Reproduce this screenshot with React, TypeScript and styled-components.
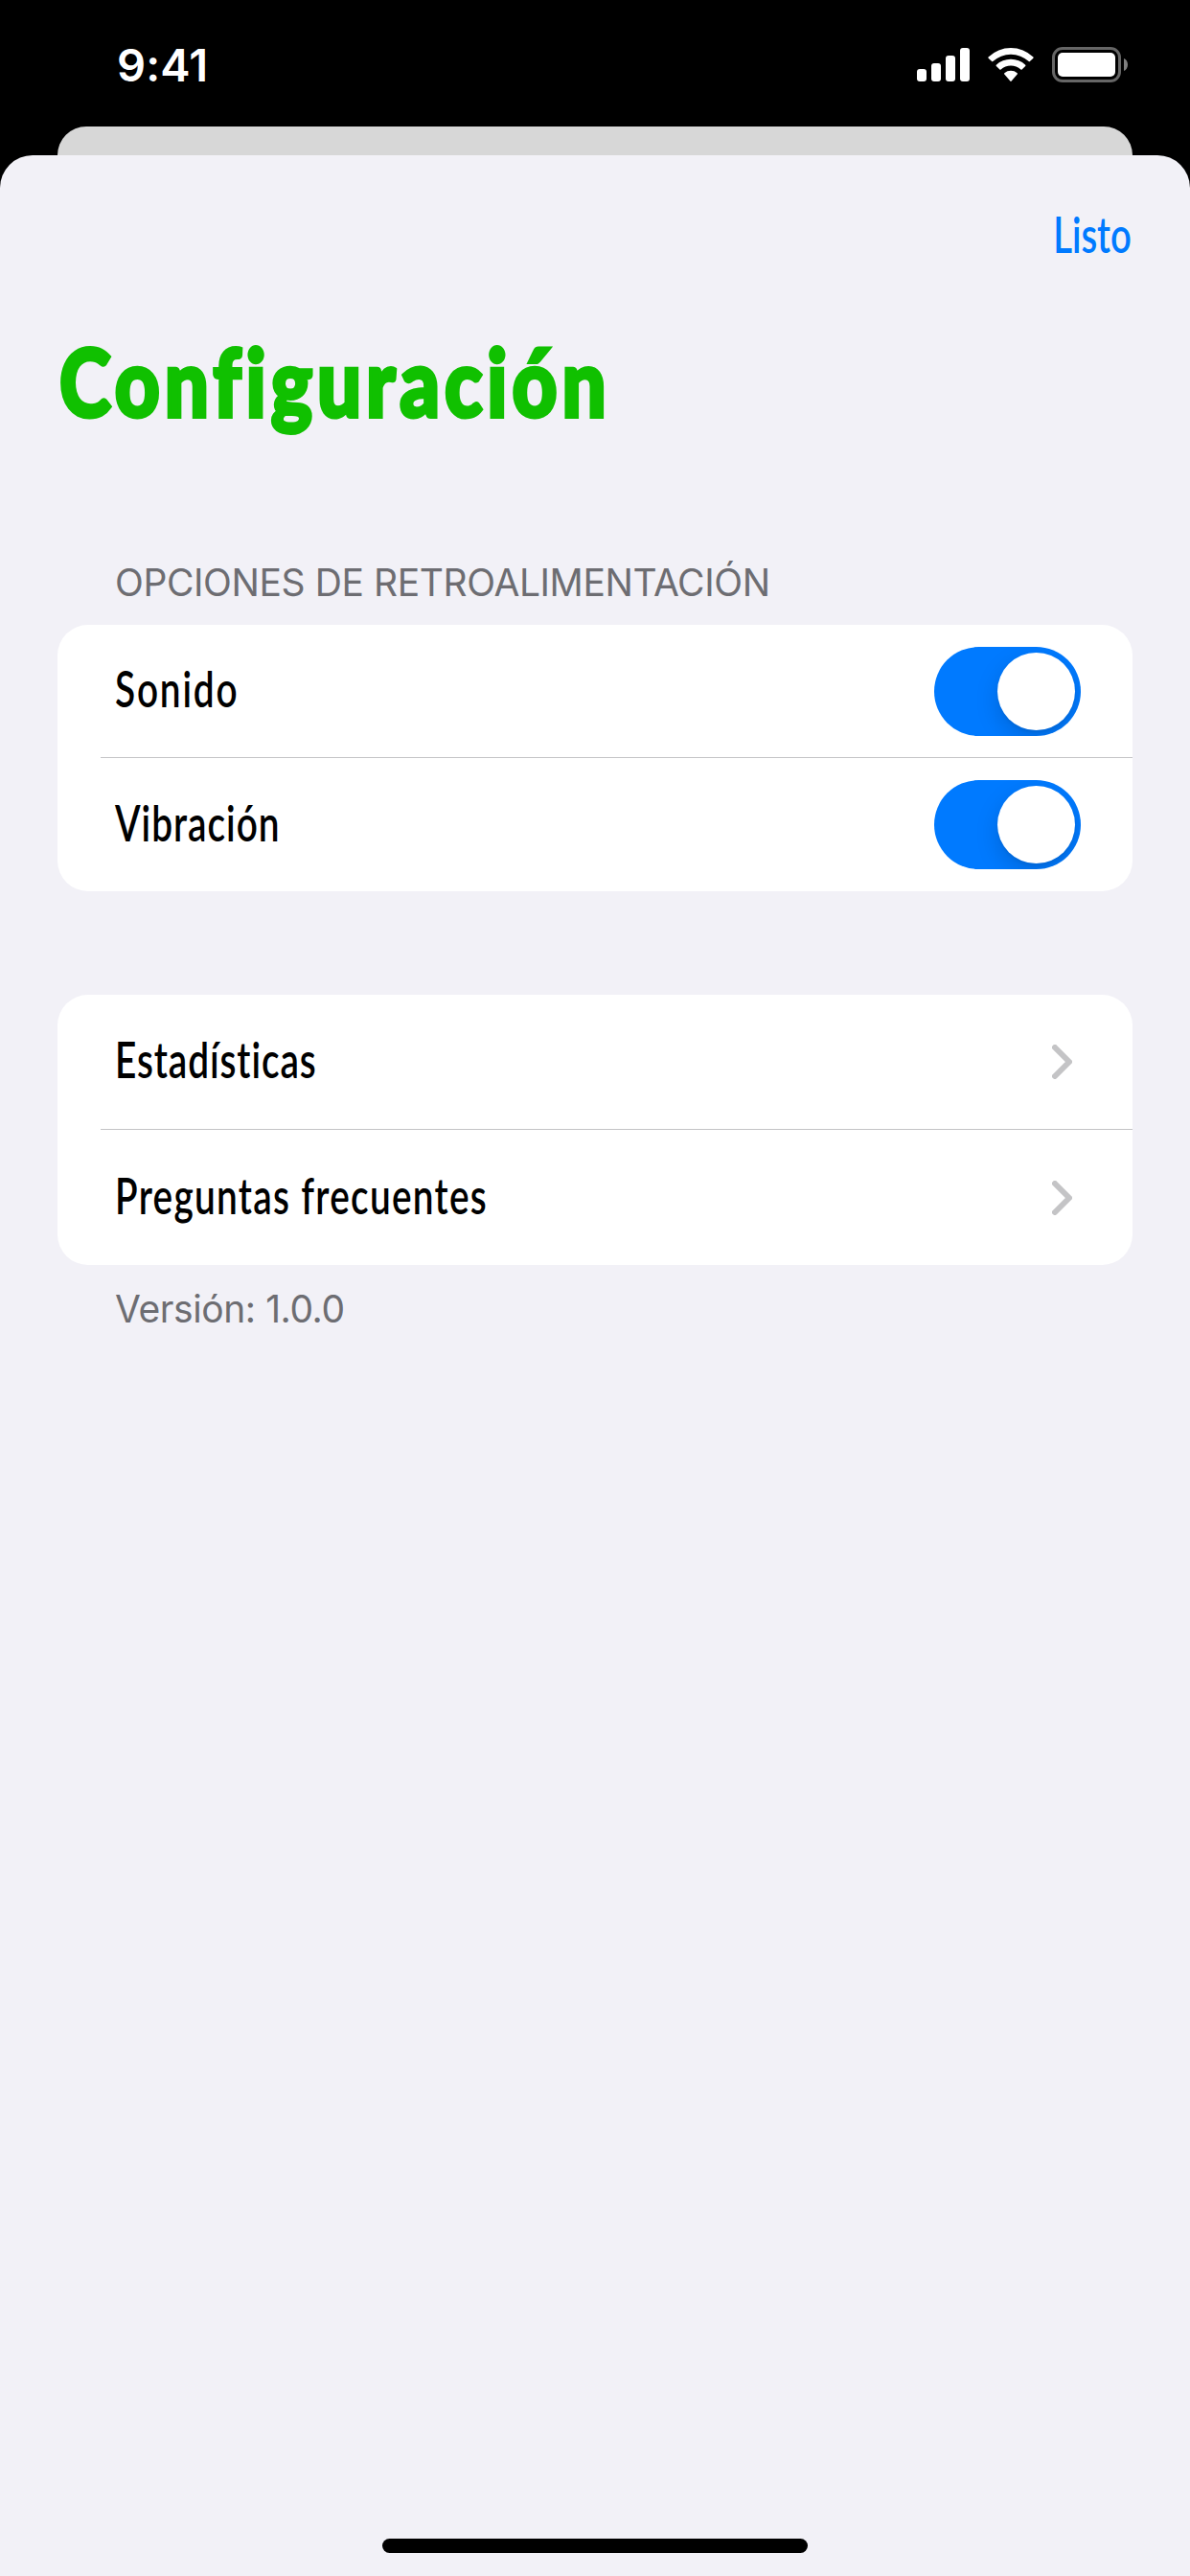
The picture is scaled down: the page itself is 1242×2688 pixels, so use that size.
import React, { useState } from "react";
import styled, { createGlobalStyle } from "styled-components";

const GlobalStyle = createGlobalStyle`
  * { box-sizing: border-box; }
  body { margin: 0; background: #000; }
`;

const condensedFamily = `Lato, "Open Sans", sans-serif`;
const systemFamily = `Inter, "Liberation Sans", sans-serif`;

const Screen = styled.div`
  display: flex;
  flex-direction: column;
  width: 1242px;
  height: 2688px;
  background: #000;
  overflow: hidden;
`;

const StatusBar = styled.header`
  display: flex;
  align-items: center;
  justify-content: space-between;
  height: 132px;
  padding: 3px 64px 0 122px;
`;

const Clock = styled.time`
  font: 600 47px/57px ${systemFamily};
  letter-spacing: 0.1px;
  color: #fff;
`;

const StatusIcons = styled.div`
  display: flex;
  align-items: center;
  gap: 19px;

  svg {
    display: block;
  }
`;

const BackCard = styled.div`
  height: 30px;
  margin: 0 60px;
  border-radius: 30px 30px 0 0;
  background: #d7d7d7;
`;

const Sheet = styled.main`
  display: flex;
  flex: 1;
  flex-direction: column;
  border-radius: 34px 34px 0 0;
  background: #f2f1f7;
`;

const NavBar = styled.nav`
  display: flex;
  align-items: center;
  justify-content: flex-end;
  height: 164px;
  padding: 2px 61px 0 0;
`;

const DoneButton = styled.button`
  padding: 0;
  border: 0;
  background: none;
  color: #007aff;
  font: 600 51px/62px ${condensedFamily};
  transform: scaleX(0.75);
  transform-origin: right center;
`;

const Title = styled.h1`
  align-self: flex-start;
  margin: 12px 0 0 62px;
  color: #10c000;
  font: 900 97px/120px ${condensedFamily};
  letter-spacing: 5.9px;
  white-space: nowrap;
  -webkit-text-stroke: 4px #10c000;
  transform: scaleX(0.84);
  transform-origin: left center;
`;

const Section = styled.section<{ $top: number }>`
  display: flex;
  flex-direction: column;
  margin: ${(p) => p.$top}px 60px 0;
`;

const SectionHeader = styled.h2`
  margin: 0;
  padding-left: 60px;
  color: #6d6d72;
  font: 400 39px/88px ${systemFamily};
  letter-spacing: -0.4px;
`;

const SectionFooter = styled.p`
  margin: 22px 0 0;
  padding-left: 60px;
  color: #6d6d72;
  font: 400 39px/48px ${systemFamily};
  letter-spacing: -0.43px;
`;

const Card = styled.div`
  display: flex;
  flex-direction: column;
  border-radius: 32px;
  background: #fff;
  overflow: hidden;
`;

const Separator = styled.hr`
  width: calc(100% - 45px);
  height: 1px;
  margin: 0 0 0 45px;
  border: 0;
  background: #c4c4c6;
`;

const Row = styled.div<{ $height: number; $end: number }>`
  display: flex;
  align-items: center;
  justify-content: space-between;
  height: ${(p) => p.$height}px;
  padding: 0 ${(p) => p.$end}px 0 60px;
`;

const RowLabel = styled.span<{ $tracking: number }>`
  padding-bottom: 4px;
  color: #000;
  font: 600 51px/62px ${condensedFamily};
  letter-spacing: ${(p) => p.$tracking}px;
  white-space: nowrap;
  transform: scaleX(0.76);
  transform-origin: left center;
`;

const Track = styled.button<{ $on: boolean }>`
  display: flex;
  align-items: center;
  justify-content: ${(p) => (p.$on ? "flex-end" : "flex-start")};
  width: 153px;
  height: 93px;
  padding: 0 6px;
  border: 0;
  border-radius: 47px;
  background: ${(p) => (p.$on ? "#007aff" : "#e9e9eb")};
  overflow: hidden;
`;

const Thumb = styled.span`
  width: 81px;
  height: 81px;
  border-radius: 50%;
  background: #fff;
  box-shadow: 0 9px 24px rgba(0, 0, 0, 0.15), 0 3px 3px rgba(0, 0, 0, 0.05);
`;

const HomeArea = styled.footer`
  display: flex;
  justify-content: center;
  margin-top: auto;
  padding-bottom: 24px;
`;

const HomeIndicator = styled.div`
  width: 444px;
  height: 15px;
  border-radius: 8px;
  background: #000;
`;

function SignalIcon() {
  return (
    <svg width="55" height="37" viewBox="0 0 55 37" fill="#fff">
      <rect x="0" y="23" width="10" height="13" rx="3" />
      <rect x="15" y="17" width="10" height="19" rx="3" />
      <rect x="30" y="9" width="10" height="27" rx="3" />
      <rect x="45" y="1" width="10" height="35" rx="3" />
    </svg>
  );
}

function WifiIcon() {
  return (
    <svg width="48" height="37" viewBox="0 0 48 37" fill="#fff">
      <path d="M0.6 10.4A34 34 0 0 1 47.4 10.4Q48 11 47.4 11.7L43.9 15.1Q43.3 15.6 42.7 15.1A27.4 27.4 0 0 0 5.3 15.1Q4.7 15.6 4.1 15.1L0.6 11.7Q0 11 0.6 10.4Z" />
      <path d="M8.8 18.7A22.4 22.4 0 0 1 39.2 18.7Q39.8 19.3 39.2 19.9L35.6 23.6Q35 24.1 34.4 23.6A15.4 15.4 0 0 0 13.6 23.6Q13 24.1 12.4 23.6L8.8 19.9Q8.2 19.3 8.8 18.7Z" />
      <path d="M17.3 27.2A10.4 10.4 0 0 1 30.7 27.2Q31.3 27.9 30.7 28.6L24.7 35.6Q24 36.4 23.3 35.6L17.3 28.6Q16.7 27.9 17.3 27.2Z" />
    </svg>
  );
}

function BatteryIcon() {
  return (
    <svg width="80" height="37" viewBox="0 0 80 37">
      <rect x="1.5" y="1.5" width="69" height="34" rx="9.5" fill="none" stroke="#666" strokeWidth="3" />
      <rect x="6" y="6" width="60" height="25" rx="5" fill="#fff" />
      <path d="M75 12C77.6 13 79 15.6 79 18.5S77.6 24 75 25Z" fill="#808080" />
    </svg>
  );
}

function ChevronIcon() {
  return (
    <svg width="21" height="36" viewBox="0 0 21 36" fill="none">
      <path d="M3 3L18 18L3 33" stroke="#c4c4c6" strokeWidth="6" strokeLinecap="round" strokeLinejoin="round" />
    </svg>
  );
}

function Toggle({ label }: { label: string }) {
  const [on, setOn] = useState(true);
  return (
    <Track type="button" role="switch" aria-checked={on} aria-label={label} $on={on} onClick={() => setOn(!on)}>
      <Thumb />
    </Track>
  );
}

export default function App() {
  return (
    <Screen>
      <GlobalStyle />
      <StatusBar>
        <Clock>9:41</Clock>
        <StatusIcons>
          <SignalIcon />
          <WifiIcon />
          <BatteryIcon />
        </StatusIcons>
      </StatusBar>
      <BackCard />
      <Sheet>
        <NavBar>
          <DoneButton type="button">Listo</DoneButton>
        </NavBar>
        <Title>Configuración</Title>

        <Section $top={106}>
          <SectionHeader>OPCIONES DE RETROALIMENTACIÓN</SectionHeader>
          <Card>
            <Row $height={138} $end={54}>
              <RowLabel $tracking={2.4}>Sonido</RowLabel>
              <Toggle label="Sonido" />
            </Row>
            <Separator />
            <Row $height={139} $end={54}>
              <RowLabel $tracking={1.3}>Vibración</RowLabel>
              <Toggle label="Vibración" />
            </Row>
          </Card>
        </Section>

        <Section $top={108}>
          <Card>
            <Row $height={140} $end={63}>
              <RowLabel $tracking={1.2}>Estadísticas</RowLabel>
              <ChevronIcon />
            </Row>
            <Separator />
            <Row $height={141} $end={63}>
              <RowLabel $tracking={1.7}>Preguntas frecuentes</RowLabel>
              <ChevronIcon />
            </Row>
          </Card>
          <SectionFooter>Versión: 1.0.0</SectionFooter>
        </Section>

        <HomeArea>
          <HomeIndicator />
        </HomeArea>
      </Sheet>
    </Screen>
  );
}
